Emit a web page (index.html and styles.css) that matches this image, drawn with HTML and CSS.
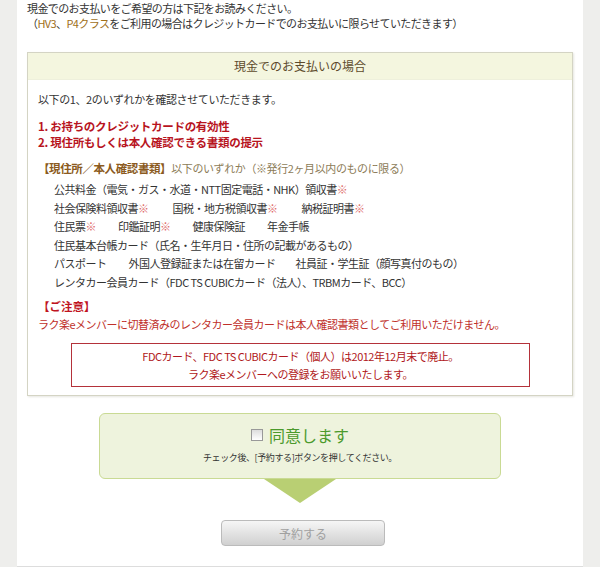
FILE: index.html
```html
<!DOCTYPE html>
<html lang="ja">
<head>
  <meta charset="UTF-8">
  <title>お支払いについて</title>
  <link rel="stylesheet" href="styles.css">
</head>
<body>
  <div class="page">
    <p class="lead">現金でのお支払いをご希望の方は下記をお読みください。<br>
      （<span class="olive">HV3</span>、<span class="olive">P4クラス</span>をご利用の場合はクレジットカードでのお支払いに限らせていただきます）</p>

    <div class="cash-box">
      <div class="cash-head">現金でのお支払いの場合</div>
      <div class="cash-body">
        <p class="intro">以下の1、2のいずれかを確認させていただきます。</p>
        <ol class="checks">
          <li>1. お持ちのクレジットカードの有効性</li>
          <li>2. 現住所もしくは本人確認できる書類の提示</li>
        </ol>
        <p class="doc-title"><b>【現住所／本人確認書類】</b>以下のいずれか（※発行2ヶ月以内のものに限る）</p>
        <ul class="docs">
          <li>公共料金（電気・ガス・水道・NTT固定電話・NHK）領収書<span class="mark">※</span></li>
          <li><span class="w1">社会保険料領収書<span class="mark">※</span></span><span class="w1">国税・地方税領収書<span class="mark">※</span></span>納税証明書<span class="mark">※</span></li>
          <li><span class="w2">住民票<span class="mark">※</span></span><span class="w2">印鑑証明<span class="mark">※</span></span><span class="w2">健康保険証</span>年金手帳</li>
          <li>住民基本台帳カード（氏名・生年月日・住所の記載があるもの）</li>
          <li><span class="w2">パスポート</span><span class="w3">外国人登録証または在留カード</span>社員証・学生証（顔写真付のもの）</li>
          <li>レンタカー会員カード（FDC TS CUBICカード（法人）、TRBMカード、BCC）</li>
        </ul>
        <p class="caution-title">【ご注意】</p>
        <p class="caution">ラク楽eメンバーに切替済みのレンタカー会員カードは本人確認書類としてご利用いただけません。</p>
        <div class="notice">
          FDCカード、FDC TS CUBICカード（個人）は2012年12月末で廃止。<br>
          ラク楽eメンバーへの登録をお願いいたします。
        </div>
      </div>
    </div>

    <div class="agree">
      <label class="agree-label"><span class="check"></span>同意します</label>
      <p class="agree-note">チェック後、[予約する]ボタンを押してください。</p>
    </div>
    <div class="arrow"></div>

    <div class="submit-row">
      <button class="submit" disabled>予約する</button>
    </div>
  </div>
</body>
</html>
```

FILE: styles.css
```css
body { margin: 0; background: #eeeeec; font-family: "Noto Sans CJK JP", "Noto Sans", sans-serif; color: #333; font-size: 11px; }
p { margin: 0; }
.page { width: 566px; margin: 0 auto; background: #fff; height: 567px; border-bottom: 1px solid #ddd; box-sizing: border-box; padding: 1px 0 0; }
.lead { margin-left: 10px; line-height: 15px; letter-spacing: -0.6px; }
.olive { color: #a0701a; }

.cash-box { margin: 21px 10px 0 10px; border: 1px solid #d4d4c4; box-shadow: 1px 1px 2px #e6e6e0; }
.cash-head { background: #f4f6df; text-align: center; height: 26px; line-height: 26px; font-size: 12px; color: #5d4a2c; border-bottom: 1px solid #eef0dc; }
.cash-body { padding: 11px 10px 8px 10px; }
.intro { letter-spacing: -0.4px; line-height: 16px; }
.checks { list-style: none; margin: 11px 0 0; padding: 0; color: #b8141e; font-weight: bold; font-size: 11.5px; line-height: 16px; letter-spacing: -0.3px; }
.doc-title { margin-top: 10px; color: #8c7c58; line-height: 16px; letter-spacing: -0.4px; }
.doc-title b { color: #8b5a20; font-size: 11.5px; }
.docs { list-style: none; margin: 4px 0 0 16px; padding: 0; line-height: 18.5px; letter-spacing: -0.5px; }
.mark { color: #e06a6a; }
.w1 { margin-right: 24px; }
.w2 { margin-right: 22px; }
.w3 { margin-right: 20px; }
.caution-title { margin-top: 6px; color: #c0141e; font-weight: bold; font-size: 11.5px; line-height: 18px; }
.caution { color: #c0302a; line-height: 18px; letter-spacing: -0.5px; }
.notice { margin: 10px 32px 0 33px; border: 1px solid #b4323a; text-align: center; color: #b01820; line-height: 18px; padding: 3px 0; letter-spacing: -0.5px; }

.agree { margin: 17px 0 0 82px; width: 402px; height: 66px; box-sizing: border-box; background: #eef3dd; border: 1px solid #c9da94; border-radius: 6px; text-align: center; }
.agree-label { display: flex; justify-content: center; align-items: center; gap: 6px; margin-top: 11px; color: #4b9a2c; font-size: 16px; line-height: 20px; }
.check { width: 10px; height: 10px; border: 1px solid #999; background: linear-gradient(#ddd, #fff); }
.agree-note { margin-top: 6px; font-size: 9px; color: #333; letter-spacing: -0.4px; }
.arrow { width: 0; height: 0; margin: 0 auto; border-left: 36px solid transparent; border-right: 36px solid transparent; border-top: 24px solid #b9cf73; }

.submit-row { display: flex; justify-content: center; margin-top: 17px; padding-left: 6px; }
.submit { width: 164px; height: 26px; border: 1px solid #bbb; border-radius: 4px; background: linear-gradient(#f6f6f6, #d0d0d0); color: #a0a0a0; font-family: inherit; font-size: 12px; }
```
